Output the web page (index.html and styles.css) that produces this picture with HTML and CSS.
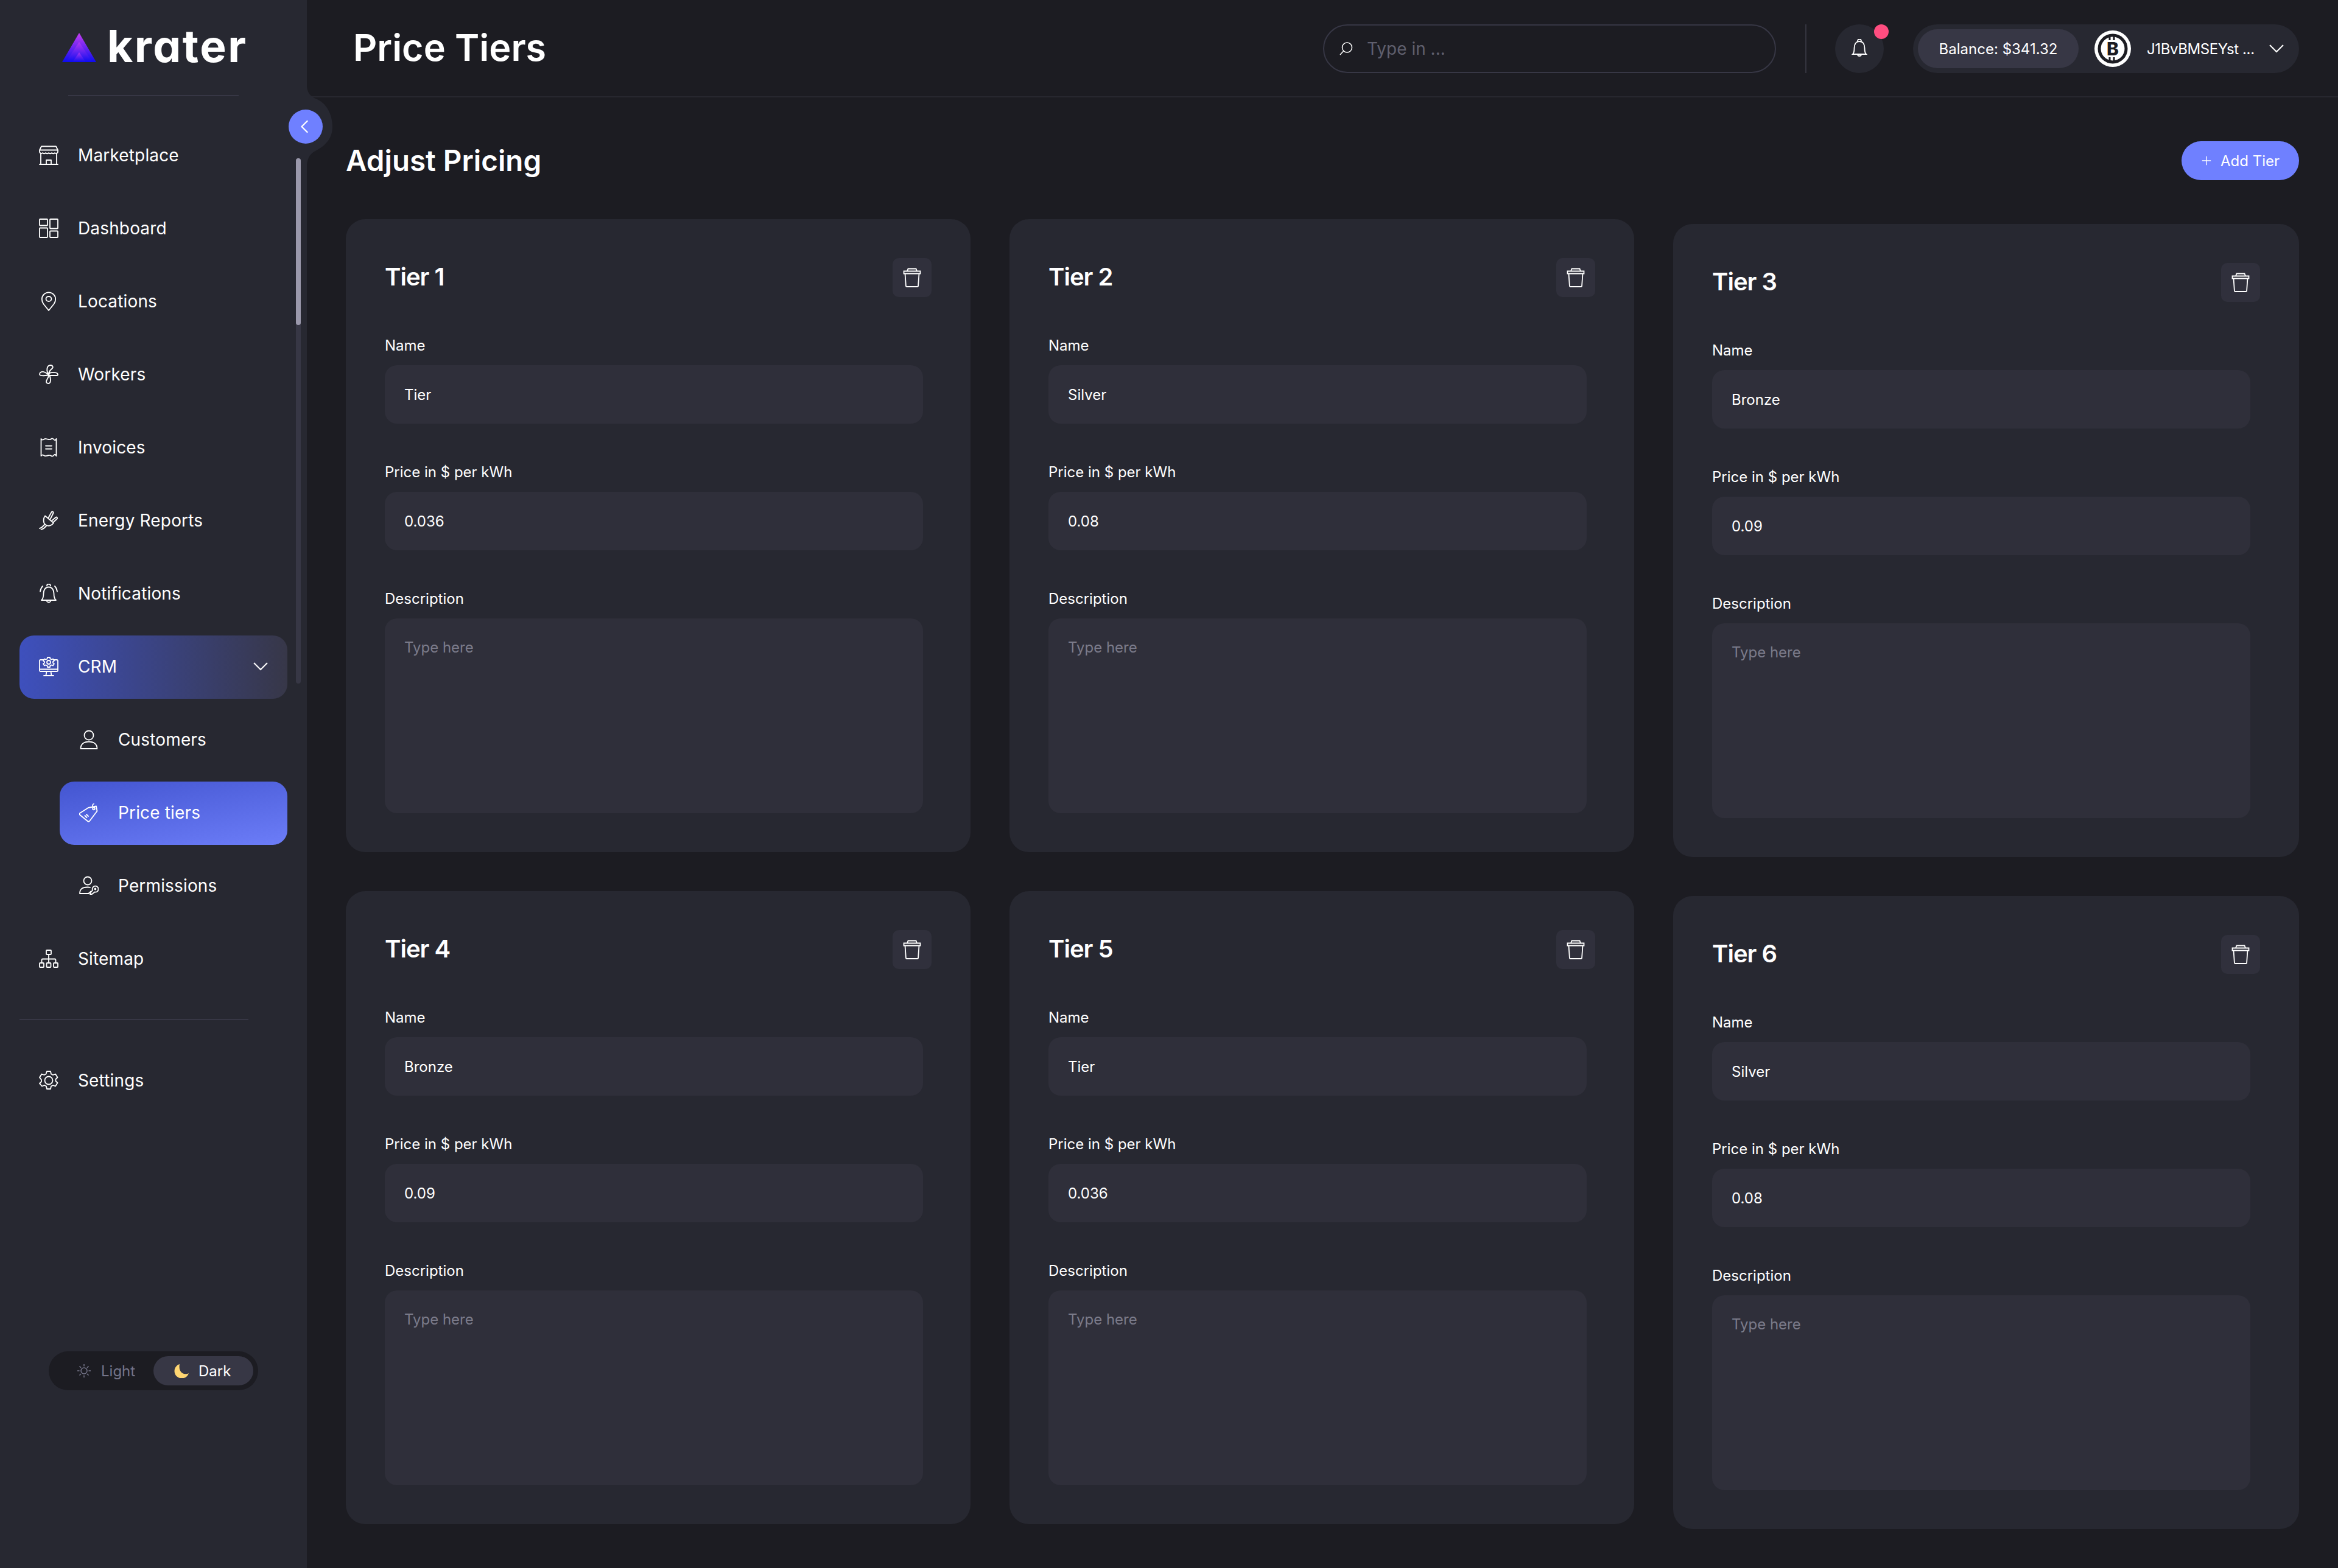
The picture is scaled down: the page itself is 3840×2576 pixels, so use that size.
FILE: index.html
```html
<!DOCTYPE html>
<html lang="en">
<head>
    <meta charset="UTF-8">
    <title>Krater - Price Tiers</title>
    <link rel="stylesheet" href="styles.css">
</head>
<body>
    <svg class="sprite" xmlns="http://www.w3.org/2000/svg">
        <symbol id="i-trash" viewBox="0 0 32 32"><path d="M4.500 9.500l1.400 20a1.500 1.500 0 0 0 1.500 1.500h17.200a1.500 1.500 0 0 0 1.500-1.500l1.400-20M2.500 5.500h27v4h-27zM8 5.500l1.500-4h13l1.500 4"/></symbol>
    </svg>

    <div class="app">
        <aside class="sidebar">
            <svg class="notch" viewBox="0 0 44 136"><path d="M0 0C0 12 6 18 14 22C32 28 42 48 42 68C42 88 30 100 14 108C6 112 0 120 0 134Z"/></svg>
            <button class="collapse" type="button">
                <svg viewBox="0 0 24 24"><path d="M15 3L6 12l9 9"/></svg>
            </button>
            <div class="scroll-track"><div class="scroll-thumb"></div></div>

            <div class="logo">
                <svg class="logo-mark" viewBox="0 0 56 48">
                    <defs>
                        <linearGradient id="lg" x1="0" y1="0" x2="0" y2="1">
                            <stop offset="0" stop-color="#c83ef2"/>
                            <stop offset="1" stop-color="#0c0cf0"/>
                        </linearGradient>
                    </defs>
                    <polygon points="28,0 56,48 0,48" fill="url(#lg)"/>
                    <polygon points="28,15 50,48 6,48" fill="url(#lg)" opacity=".7"/>
                    <polygon points="28,32 39,48 17,48" fill="url(#lg)" opacity=".7"/>
                </svg>
                <span class="logo-text"><span class="logo-k">k</span>rater</span>
            </div>
            <div class="sidebar-rule"></div>

            <nav class="nav">
                <a class="nav-item">
                    <svg class="icon" viewBox="0 0 32 32"><path d="M1 31h30M3 13v18M29 13v18M4 1.500h24l3 6v3a3 3 0 0 1-5 1.700a4 4 0 0 1-5 0a4 4 0 0 1-5 0a4 4 0 0 1-5 0a4 4 0 0 1-5 0a3 3 0 0 1-5-1.700v-3zM1 7.500h30M12 31v-7h8v7"/></svg>
                    Marketplace
                </a>
                <a class="nav-item">
                    <svg class="icon" viewBox="0 0 32 32"><rect x="1" y="1" width="13" height="10.500" rx="1"/><rect x="18" y="1" width="13" height="15.500" rx="1"/><rect x="1" y="15.500" width="13" height="15.500" rx="1"/><rect x="18" y="20.500" width="13" height="10.500" rx="1"/></svg>
                    Dashboard
                </a>
                <a class="nav-item">
                    <svg class="icon" viewBox="0 0 32 32"><path d="M16 31L7.500 20.500C5 17 4.800 15 4.800 12.500a11.200 11.200 0 0 1 22.400 0c0 2.500-.2 4.500-2.700 8z"/><ellipse cx="16" cy="12" rx="4.500" ry="4"/></svg>
                    Locations
                </a>
                <a class="nav-item">
                    <svg class="icon" viewBox="0 0 32 32"><path d="M16 15C12 12 12 1 19 1c4 0 5 4 2 6c-2 1.500-4 3-5 8zM16 15c3-3 15-3 15 1.500c0 1-.5 1.500-1.500 1.500H18c-1 0-2-1.500-2-3zM16 16c3 3 5 15-.5 15C12 31 11 28 13 25c1.500-2 3-4 3-9zM16 16c-3 3-15 3-15 0c0-3.500 4-5 7-4c3 .8 5 3 8 4z"/></svg>
                    Workers
                </a>
                <a class="nav-item">
                    <svg class="icon" viewBox="0 0 32 32"><path d="M3.500 2v28M28.500 2v28M3.500 2q2 2.500 4.200 1t4.100-1t4.200 1t4.200-1t4.100 1t4.200-1M3.500 30q2-2.500 4.200-1t4.100 1t4.200-1t4.200 1t4.100-1t4.200 1M11 13.500h10M11 18.500h10"/></svg>
                    Invoices
                </a>
                <a class="nav-item">
                    <svg class="icon" viewBox="0 0 32 32"><path d="M10 8.500l14 11.500c-2.500 4-7 5.500-10.500 4.500l-3-1.500c-3.500-2.500-4-10 -.5-14.500zM15 12.500l5.500-10c1-2 4-.5 3 1.500l-5 10M20.500 17l7-6c1.800-1.300 3.500 1 2 2.500l-6.500 6M9.500 22.500L5 27c-1.300 1.300-2.500 1.500-4 2M12.500 24.500l-4 4c-1.500 1.500-3 2-5 2.500"/></svg>
                    Energy Reports
                </a>
                <a class="nav-item">
                    <svg class="icon" viewBox="0 0 32 32"><path d="M4 27c3-2.500 3.500-6 3.500-11S10 5.500 16 5.500S24.500 11 24.500 16s.5 8.500 3.500 11zM13 3.500a3 3 0 0 1 6 0M12.500 27a3.500 3.500 0 0 0 7 0M6 4C4 6 2.500 9 2 13M26 4c2 2 3.500 5 4 9"/></svg>
                    Notifications
                </a>
                <a class="nav-item nav-open">
                    <svg class="icon" viewBox="0 0 32 32"><path d="M8 5H2.500a1.500 1.500 0 0 0-1.500 1.500v16A1.500 1.500 0 0 0 2.500 24h27a1.500 1.500 0 0 0 1.500-1.500v-16A1.500 1.500 0 0 0 29.500 5H24M1 20.500h30M12.500 24l-1 6.500M19.500 24l1 6.500M8 31h16M14 1h4l.5 2.500l2.500 1l2-1l2 3l-2 1.500v2l2 1.500l-2 3l-2-1l-2.500 1L18 17h-4l-.5-2.500l-2.500-1l-2 1l-2-3l2-1.500V8L7 6.500l2-3l2 1l2.500-1z"/><circle cx="16" cy="9" r="3"/></svg>
                    CRM
                    <svg class="chevron" viewBox="0 0 24 14"><path d="M1 1l11 11L23 1"/></svg>
                </a>
                <a class="nav-item nav-sub">
                    <svg class="icon" viewBox="0 0 32 32"><ellipse cx="16" cy="9" rx="7.500" ry="7.500"/><path d="M2.500 31c0-8 6-11.500 13.500-11.500S29.500 23 29.500 31z"/></svg>
                    Customers
                </a>
                <a class="nav-item nav-sub nav-active">
                    <svg class="icon" viewBox="0 0 32 32"><path d="M1 17L15 8l13-2.500l1.500 8L17 30a2 2 0 0 1-2.500.5L1.500 20a2 2 0 0 1-.5-3zM24 1.500c-3 1-2.500 8 1.500 6.500M12 19l3 3M9.500 21l3 3"/><circle cx="24" cy="9.500" r="1.800"/></svg>
                    Price tiers
                </a>
                <a class="nav-item nav-sub">
                    <svg class="icon" viewBox="0 0 32 32"><ellipse cx="14" cy="8" rx="6.500" ry="6.500"/><path d="M1 29c0-7 4-10.500 13-10.500c1.500 0 3 .2 4 .5M1 29h15M15 29c1.500-1 3-2 4-3.500"/><path d="M19 27l3-3.500a5 5 0 1 1 3.500 3L21 30h-3z"/><circle cx="26.500" cy="21.500" r="1"/></svg>
                    Permissions
                </a>
                <a class="nav-item">
                    <svg class="icon" viewBox="0 0 32 32"><rect x="12" y="2" width="8" height="7" rx="1"/><rect x="1" y="23" width="7" height="7" rx="1"/><rect x="12.500" y="23" width="7" height="7" rx="1"/><rect x="24" y="23" width="7" height="7" rx="1"/><path d="M16 9v14M4.500 23v-5a1.500 1.500 0 0 1 1.500-1.500h20a1.500 1.500 0 0 1 1.500 1.500v5"/></svg>
                    Sitemap
                </a>
                <div class="nav-rule"></div>
                <a class="nav-item">
                    <svg class="icon" viewBox="0 0 32 32"><path d="M13 1h6l1 4.500l3 1.500l4-1.500l3.500 5.500l-3 3v3l3 3l-3.500 5.500l-4-1.500l-3 1.500l-1 4.500h-6l-1-4.500l-3-1.500l-4 1.500L1 21l3-3v-3L1 11l3.500-5.500l4 1.500l3-1.500z"/><circle cx="16" cy="16" r="6.500"/></svg>
                    Settings
                </a>
            </nav>

            <div class="theme">
                <span class="theme-opt">
                    <svg class="theme-icon" viewBox="0 0 24 24"><circle cx="12" cy="12" r="5"/><path d="M12 1v3.500M12 19.500V23M1 12h3.500M19.500 12H23M4.500 4.500L7 7M17 17l2.500 2.500M4.500 19.500L7 17M17 7l2.500-2.500"/></svg>
                    Light
                </span>
                <span class="theme-opt theme-on">
                    <svg class="theme-moon" viewBox="0 0 24 24"><path d="M9 1a12 12 0 1 0 15 15c-1 .8-4 1.500-6 1.300C12 17 7 11 9 1z"/></svg>
                    Dark
                </span>
            </div>
        </aside>

        <div class="main">
            <header class="topbar">
                <h1>Price Tiers</h1>
                <div class="search">
                    <svg viewBox="0 0 24 24"><circle cx="13.500" cy="10" r="8"/><path d="M7.500 16L2 22"/></svg>
                    <input type="text" placeholder="Type in ...">
                </div>
                <div class="topbar-rule"></div>
                <div class="bell">
                    <svg viewBox="0 0 32 32"><path d="M5 25c2-2 2.500-4 2.500-10S10 4 16 4s8.500 5 8.500 11s.5 8 2.500 10zM13 3.500a3 3 0 0 1 6 0M13 25a3 3 0 0 0 6 0"/></svg>
                    <span class="bell-dot"></span>
                </div>
                <div class="account">
                    <span class="balance">Balance: $341.32</span>
                    <svg class="btc" viewBox="0 0 60 60">
                        <circle cx="30" cy="30" r="30" fill="#fff"/>
                        <circle cx="30" cy="30" r="22" fill="none" stroke="#1c1c22" stroke-width="5"/>
                        <path d="M25 10v6M32 10v6M25 44v6M32 44v6" stroke="#1c1c22" stroke-width="3"/>
                        <text x="30" y="41" text-anchor="middle" class="btc-b">B</text>
                    </svg>
                    <span class="address">J1BvBMSEYst ...</span>
                    <svg class="chevron" viewBox="0 0 24 14"><path d="M1 1l11 11L23 1"/></svg>
                </div>
            </header>

            <main class="content">
                <div class="content-head">
                    <h2>Adjust Pricing</h2>
                    <button class="add" type="button">
                        <svg viewBox="0 0 20 20"><path d="M10 2v16M2 10h16"/></svg>
                        Add Tier
                    </button>
                </div>

                <div class="columns">
                    <div class="column">
                        <section class="card">
                            <div class="card-head"><h3>Tier 1</h3><button class="trash" type="button"><svg><use href="#i-trash"/></svg></button></div>
                            <label>Name</label><input type="text" value="Tier">
                            <label>Price in $ per kWh</label><input type="text" value="0.036">
                            <label>Description</label><textarea placeholder="Type here"></textarea>
                        </section>
                        <section class="card">
                            <div class="card-head"><h3>Tier 4</h3><button class="trash" type="button"><svg><use href="#i-trash"/></svg></button></div>
                            <label>Name</label><input type="text" value="Bronze">
                            <label>Price in $ per kWh</label><input type="text" value="0.09">
                            <label>Description</label><textarea placeholder="Type here"></textarea>
                        </section>
                    </div>
                    <div class="column">
                        <section class="card">
                            <div class="card-head"><h3>Tier 2</h3><button class="trash" type="button"><svg><use href="#i-trash"/></svg></button></div>
                            <label>Name</label><input type="text" value="Silver">
                            <label>Price in $ per kWh</label><input type="text" value="0.08">
                            <label>Description</label><textarea placeholder="Type here"></textarea>
                        </section>
                        <section class="card">
                            <div class="card-head"><h3>Tier 5</h3><button class="trash" type="button"><svg><use href="#i-trash"/></svg></button></div>
                            <label>Name</label><input type="text" value="Tier">
                            <label>Price in $ per kWh</label><input type="text" value="0.036">
                            <label>Description</label><textarea placeholder="Type here"></textarea>
                        </section>
                    </div>
                    <div class="column column-low">
                        <section class="card">
                            <div class="card-head"><h3>Tier 3</h3><button class="trash" type="button"><svg><use href="#i-trash"/></svg></button></div>
                            <label>Name</label><input type="text" value="Bronze">
                            <label>Price in $ per kWh</label><input type="text" value="0.09">
                            <label>Description</label><textarea placeholder="Type here"></textarea>
                        </section>
                        <section class="card">
                            <div class="card-head"><h3>Tier 6</h3><button class="trash" type="button"><svg><use href="#i-trash"/></svg></button></div>
                            <label>Name</label><input type="text" value="Silver">
                            <label>Price in $ per kWh</label><input type="text" value="0.08">
                            <label>Description</label><textarea placeholder="Type here"></textarea>
                        </section>
                    </div>
                </div>
            </main>
        </div>
    </div>
</body>
</html>
```

FILE: styles.css
```css
* {
    box-sizing: border-box;
}
html, body {
    margin: 0;
    width: 3840px;
    height: 2576px;
    overflow: hidden;
    background: #1c1c22;
    color: #fff;
    font-family: Inter, "Noto Sans", sans-serif;
}
.sprite {
    display: none;
}
.app {
    display: flex;
    height: 2576px;
}

/* sidebar */
.sidebar {
    position: relative;
    flex: 0 0 504px;
    background: #272831;
    display: flex;
    flex-direction: column;
}
.notch {
    position: absolute;
    left: 504px;
    top: 140px;
    width: 44px;
    height: 136px;
    fill: #272831;
    z-index: 2;
}
.collapse {
    position: absolute;
    left: 474px;
    top: 180px;
    width: 56px;
    height: 56px;
    padding: 0;
    border: 0;
    border-radius: 50%;
    background: #6f80ff;
    display: flex;
    align-items: center;
    justify-content: center;
    z-index: 3;
}
.collapse svg {
    width: 26px;
    height: 26px;
    fill: none;
    stroke: #fff;
    stroke-width: 2;
}
.scroll-track {
    position: absolute;
    left: 486px;
    top: 260px;
    width: 8px;
    height: 863px;
    border-radius: 4px;
    background: #373745;
}
.scroll-thumb {
    height: 274px;
    border-radius: 4px;
    background: #9a98ab;
}
.logo {
    display: flex;
    align-items: flex-end;
    gap: 18px;
    height: 48px;
    margin: 54px 0 0 102px;
}
.logo-mark {
    width: 56px;
    height: 48px;
}
.logo-text {
    font-size: 73px;
    font-weight: 700;
    line-height: 48px;
    height: 48px;
    margin-bottom: 2px;
    letter-spacing: 2.5px;
    font-feature-settings: "cv11";
    white-space: nowrap;
}
.logo-k {
    font-variant: small-caps;
}
.sidebar-rule {
    width: 280px;
    height: 2px;
    margin: 54px 0 0 112px;
    background: #373745;
}
.nav {
    display: flex;
    flex-direction: column;
    gap: 16px;
    margin: 46px 0 0 32px;
    width: 440px;
}
.nav-item {
    display: flex;
    align-items: center;
    gap: 32px;
    height: 104px;
    padding-left: 32px;
    padding-bottom: 2px;
    border-radius: 24px;
    font-size: 28px;
    letter-spacing: .15px;
    color: #fff;
}
.icon {
    flex: none;
    width: 32px;
    height: 32px;
    fill: none;
    stroke: #fff;
    stroke-width: 1.8;
    stroke-linejoin: round;
    stroke-linecap: round;
}
.nav-open {
    background: linear-gradient(90deg, #3e50bd, #373748);
}
.chevron {
    width: 24px;
    height: 14px;
    fill: none;
    stroke: #fff;
    stroke-width: 2;
}
.nav-open .chevron {
    margin-left: auto;
    margin-right: 32px;
}
.nav-sub {
    margin-left: 66px;
    padding-left: 32px;
}
.nav-active {
    background: linear-gradient(170deg, #4355d0, #6c7df8);
}
.nav-rule {
    width: 376px;
    height: 2px;
    margin: 30px 0 32px;
    background: #373745;
}
.theme {
    position: absolute;
    left: 80px;
    top: 2220px;
    width: 344px;
    height: 64px;
    padding: 8px;
    border-radius: 32px;
    background: #1c1c22;
    display: flex;
    justify-content: space-between;
    font-size: 24px;
}
.theme-opt {
    display: flex;
    align-items: center;
    gap: 16px;
    padding-left: 38px;
    color: #75758a;
}
.theme-on {
    width: 164px;
    height: 48px;
    padding-left: 34px;
    border-radius: 24px;
    background: #373745;
    color: #fff;
}
.theme-icon {
    width: 24px;
    height: 24px;
    fill: none;
    stroke: #75758a;
    stroke-width: 1.5;
}
.theme-moon {
    width: 24px;
    height: 24px;
    fill: #ffd672;
}

/* top bar */
.main {
    flex: 1;
    min-width: 0;
}
.topbar {
    height: 160px;
    padding: 2px 64px 0 76px;
    border-bottom: 2px solid #27272f;
    display: flex;
    align-items: center;
}
.topbar h1 {
    margin: 0 auto 4px 0;
    font-size: 61px;
    font-weight: 600;
}
.search {
    width: 744px;
    height: 80px;
    border: 2px solid #373745;
    border-radius: 40px;
    display: flex;
    align-items: center;
    gap: 22px;
    padding-left: 24px;
}
.search svg {
    width: 24px;
    height: 24px;
    fill: none;
    stroke: #fff;
    stroke-width: 1.5;
}
.search input {
    flex: 1;
    min-width: 0;
    border: 0;
    background: none;
    font: 28px Inter, sans-serif;
    color: #fff;
    outline: none;
    padding: 0;
}
.search input::placeholder {
    color: #5f5f6d;
}
.topbar-rule {
    width: 2px;
    height: 80px;
    margin: 0 47px 0 48px;
    background: #34343f;
}
.bell {
    position: relative;
    width: 80px;
    height: 80px;
    border-radius: 50%;
    background: #272831;
    display: flex;
    align-items: center;
    justify-content: center;
    margin-right: 48px;
}
.bell svg {
    width: 32px;
    height: 32px;
    fill: none;
    stroke: #fff;
    stroke-width: 1.8;
}
.bell-dot {
    position: absolute;
    right: -8px;
    top: 0;
    width: 24px;
    height: 24px;
    border-radius: 50%;
    background: #ff4d80;
}
.account {
    width: 634px;
    height: 80px;
    border-radius: 40px;
    background: #272831;
    display: flex;
    align-items: center;
    padding-left: 8px;
    font-size: 24px;
}
.balance {
    width: 264px;
    height: 64px;
    border-radius: 32px;
    background: #373745;
    display: flex;
    align-items: center;
    justify-content: center;
}
.btc {
    flex: none;
    width: 60px;
    height: 60px;
    margin: 0 26px;
}
.btc-b {
    font: 800 30px Inter, sans-serif;
    fill: #1c1c22;
}
.address {
    width: 201px;
    letter-spacing: -.4px;
    white-space: nowrap;
}

/* content */
.content {
    padding: 72px 64px 0;
}
.content-head {
    height: 64px;
    display: flex;
    align-items: center;
    justify-content: space-between;
    margin-bottom: 64px;
}
.content-head h2 {
    margin: 0 0 2px;
    font-size: 47.500px;
    font-weight: 600;
}
.add {
    width: 193px;
    height: 64px;
    padding: 0;
    border: 0;
    border-radius: 32px;
    background: #6f80ff;
    color: #fff;
    font: 24px Inter, sans-serif;
    display: flex;
    align-items: center;
    justify-content: center;
    gap: 14px;
}
.add svg {
    width: 18px;
    height: 18px;
    fill: none;
    stroke: #fff;
    stroke-width: 1.5;
}
.columns {
    display: grid;
    grid-template-columns: 1026px 1026px 1028px;
    gap: 64px;
}
.column {
    display: flex;
    flex-direction: column;
    gap: 64px;
}
.column-low {
    padding-top: 8px;
}
.card {
    height: 1040px;
    padding: 64px;
    border-radius: 32px;
    background: #272831;
}
.card-head {
    display: flex;
    align-items: center;
    justify-content: space-between;
    height: 64px;
    margin-bottom: 64px;
}
.card-head h3 {
    margin: 0 0 4px;
    font-size: 40px;
    font-weight: 600;
    letter-spacing: -1px;
}
.trash {
    width: 64px;
    height: 64px;
    padding: 0;
    border: 0;
    border-radius: 10px;
    background: #30303c;
    display: flex;
    align-items: center;
    justify-content: center;
}
.trash svg {
    width: 32px;
    height: 32px;
    fill: none;
    stroke: #fff;
    stroke-width: 1.8;
}
.card label {
    display: block;
    height: 32px;
    margin-bottom: 16px;
    font-size: 24px;
    line-height: 32px;
}
.card input, .card textarea {
    display: block;
    width: 884px;
    border: 0;
    border-radius: 20px;
    background: #2f2f3a;
    color: #fff;
    font: 24px/32px Inter, sans-serif;
    outline: none;
    resize: none;
    padding: 0 32px;
}
.card input {
    height: 96px;
    margin-bottom: 64px;
}
.card textarea {
    height: 320px;
    padding-top: 32px;
}
.card textarea::placeholder {
    color: #7b7b8a;
}
```
